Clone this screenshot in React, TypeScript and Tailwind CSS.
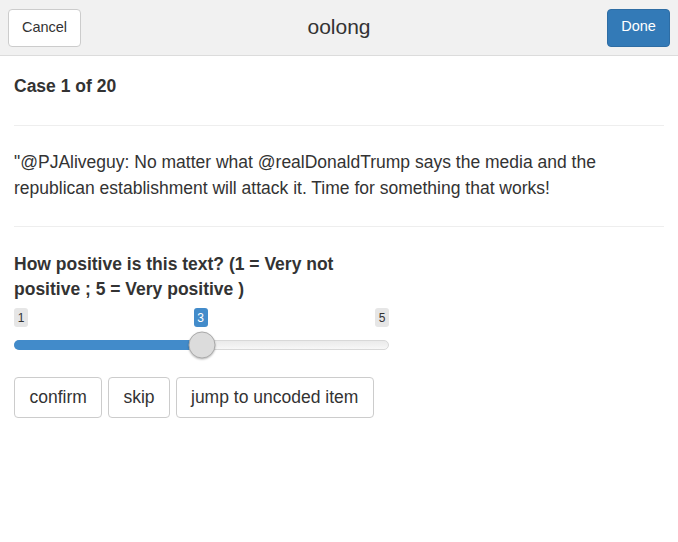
const font = { fontFamily: '"Liberation Sans", Arial, sans-serif' };

const Badge = ({ label, active }: { label: string; active?: boolean }) => (
	<span
		className={
			'flex h-[19px] min-w-[14px] items-center justify-center rounded-[3px] px-[3px] text-[12px] leading-none ' +
			(active ? 'bg-[#428bca] text-white' : 'bg-[#e6e6e6] text-[#333]')
		}
	>
		{label}
	</span>
);

const App = () => {
	const value = 3;
	const pct = ((value - 1) / 4) * 100;

	return (
		<div className="w-[678px] h-[542px] bg-white text-[#333]" style={font}>
			{/* 顶部导航栏 */}
			<header className="grid h-[56px] grid-cols-[1fr_auto_1fr] items-center border-b border-[#dcdcdc] bg-[#f1f1f1] px-2">
				<div>
					<button className="h-[38px] w-[73px] rounded-[4px] border border-[#ccc] bg-white text-[14.5px] text-[#333]">
						Cancel
					</button>
				</div>
				<h1 className="-mt-[2px] text-[21px] text-[#333]">oolong</h1>
				<div className="flex justify-end">
					<button className="h-[38px] w-[63px] rounded-[4px] border border-[#2e6da4] bg-[#337ab7] pb-[2px] text-[14.5px] text-white">
						Done
					</button>
				</div>
			</header>

			<main className="px-[14px]">
				<div className="flex h-[60px] items-center text-[17.5px] font-bold">Case 1 of 20</div>
				<hr className="mt-[9px] border-[#eee]" />

				<p className="pt-[23px] pb-[25px] text-[17.5px] leading-[26px]">
					"@PJAliveguy: No matter what @realDonaldTrump says the media and the republican establishment will
					attack it. Time for something that works!
				</p>
				<hr className="border-[#eee]" />

				<div className="w-[375px] pt-[25px]">
					<p className="text-[17.5px] font-bold leading-[25px]">
						How positive is this text? (1 = Very not positive ; 5 = Very positive )
					</p>

					{/* 滑块 */}
					<div className="mt-[6px] flex items-start justify-between">
						<Badge label="1" />
						<div className="-ml-[2px]">
							<Badge label="3" active />
						</div>
						<Badge label="5" />
					</div>
					<div className="relative mt-[13px] h-[10px] rounded-full border border-[#d8d8d8] bg-gradient-to-b from-[#eaeaea] to-[#f7f7f7]">
						<div
							className="absolute -top-px -left-px h-[10px] rounded-full bg-[#428bca]"
							style={{ width: `calc(${pct}% + 1px)` }}
						/>
						<div
							className="absolute top-1/2 h-[27px] w-[27px] -translate-x-1/2 -translate-y-1/2 rounded-full border border-[#aaa] bg-[#dcdcdc] shadow-[0_1px_2px_rgba(0,0,0,0.25)]"
							style={{ left: `${pct}%` }}
						/>
					</div>
				</div>

				<div className="mt-[27px] flex gap-[5.5px]">
					{['confirm', 'skip', 'jump to uncoded item'].map((t) => (
						<button
							key={t}
							className="h-[41px] rounded-[4px] border border-[#ccc] bg-white px-[14.5px] text-[17.5px] text-[#333]"
						>
							{t}
						</button>
					))}
				</div>
			</main>
		</div>
	);
};

export default App;
